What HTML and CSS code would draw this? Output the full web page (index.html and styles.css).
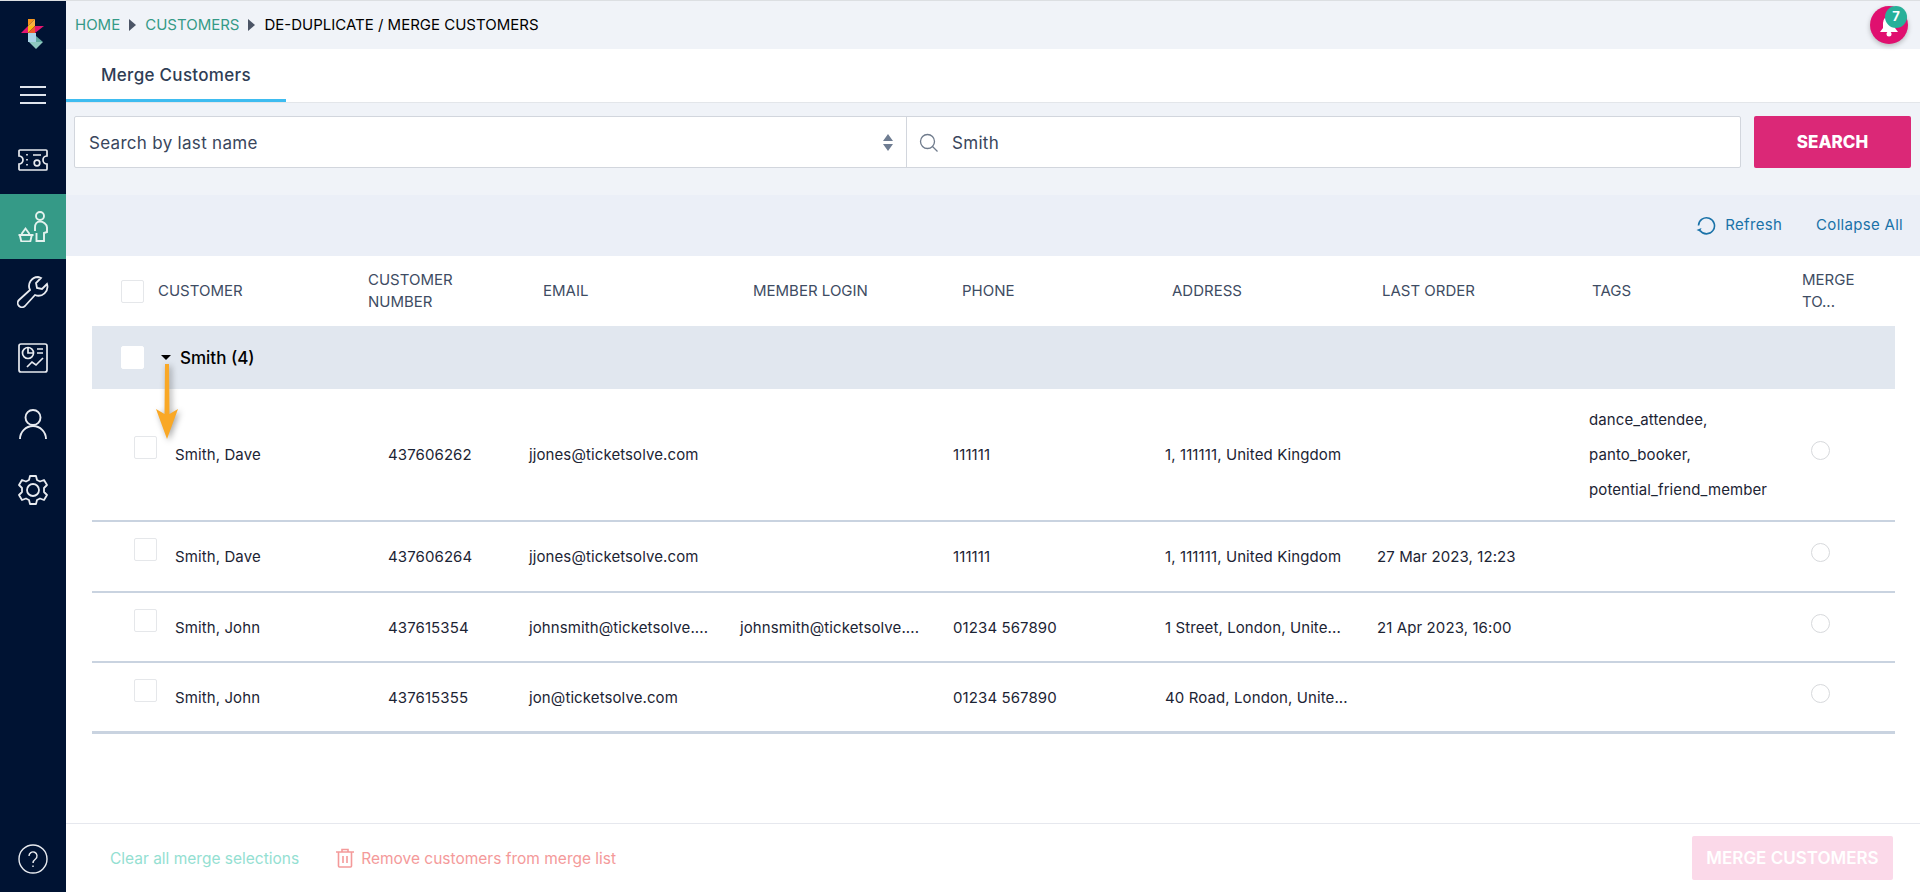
FILE: index.html
```html
<!DOCTYPE html>
<html>
<head>
  <meta charset="utf-8">
  <title>De-duplicate / Merge Customers</title>
  <link rel="stylesheet" href="styles.css">
</head>
<body>
  <div class="app">
    <nav class="sidebar">
      <div class="nav-logo">
        <svg width="24" height="32" viewBox="0 0 24 32">
          <polygon points="7,1 14,1 7,8" fill="#f7941d"/>
          <polygon points="14,1 14,8 7,8" fill="#fbb040"/>
          <polygon points="14,8 23,8 14,15" fill="#e6156f"/>
          <polygon points="0,15 7,8 7,15" fill="#e6156f"/>
          <polygon points="7,8 14,8 7,15" fill="#fdb913"/>
          <polygon points="14,8 14,15 7,15" fill="#f15a29"/>
          <polygon points="7,15 15,15 15,24 7,24" fill="#a9d3e6"/>
          <polygon points="15,24 22,24 15,31 8,24" fill="#8fc9c0"/>
          <polygon points="15,18 22,24 15,24" fill="#5fa9a0"/>
        </svg>
      </div>
      <div class="nav-item nav-menu">
        <svg width="26" height="18" viewBox="0 0 26 18" fill="none" stroke="#dfe4ec" stroke-width="2"><path d="M0 1h26M0 9h26M0 17h26"/></svg>
      </div>
      <div class="nav-item nav-tickets">
        <svg width="30" height="22" viewBox="0 0 30 22" fill="none" stroke="#e8ebf0" stroke-width="1.700"><path d="M2 1h26a1 1 0 0 1 1 1v5a4 4 0 0 0 0 8v5a1 1 0 0 1-1 1H2a1 1 0 0 1-1-1v-5a4 4 0 0 0 0-8V2a1 1 0 0 1 1-1z"/><path d="M9 5v1.500M9 10v1.500M9 15v1.500M15 6h8"/><circle cx="19" cy="14" r="2.800"/></svg>
      </div>
      <div class="nav-item nav-active">
        <svg width="30" height="31" viewBox="0 0 30 31" fill="none" stroke="#e4f2ee" stroke-width="1.900"><circle cx="22" cy="5" r="4"/><path d="M17 20v-3.500c0-3.500 2-6 5-6s7 2.500 7 6V21l-3 1v8h-7.500v-8"/><path d="M0.500 24h15M1.800 24l1.500 6.500h9l1.500-6.500M3.500 23l4-5.500 4 5.500"/></svg>
      </div>
      <div class="nav-item nav-tool">
        <svg width="32" height="32" viewBox="0 0 32 32" fill="none" stroke="#e8ebf0" stroke-width="1.800"><path d="M21 1a9 9 0 0 0-8 13L2 24a4 4 0 0 0 6 6l10-11a9 9 0 0 0 12-11l-5 5-5-1-1-5 5-5a9 9 0 0 0-3-1z"/></svg>
      </div>
      <div class="nav-item nav-tool">
        <svg width="30" height="30" viewBox="0 0 30 30" fill="none" stroke="#e8ebf0" stroke-width="1.700"><rect x="1" y="1" width="28" height="28" rx="2"/><circle cx="10" cy="10" r="5.500"/><path d="M10 5v5h5M19 6h6M19 10h6M9 24l5-5 4 3 7-7"/></svg>
      </div>
      <div class="nav-item nav-tool">
        <svg width="28" height="30" viewBox="0 0 28 30" fill="none" stroke="#e8ebf0" stroke-width="1.900"><circle cx="14" cy="8.500" r="7.500"/><path d="M1 30a13 13 0 0 1 26 0"/></svg>
      </div>
      <div class="nav-item nav-tool">
        <svg width="32" height="32" viewBox="0 0 32 32" fill="none" stroke="#e8ebf0" stroke-width="1.800"><circle cx="16" cy="16" r="6"/><path d="M13 2h6l1 4 3 1.500 4-1.500 3 5-3 3v4l3 3-3 5-4-1.500-3 1.500-1 4h-6l-1-4-3-1.500-4 1.500-3-5 3-3v-4l-3-3 3-5 4 1.500 3-1.500z" stroke-linejoin="round"/></svg>
      </div>
      <div class="nav-item nav-help">
        <svg width="30" height="30" viewBox="0 0 30 30" fill="none" stroke="#e8ebf0" stroke-width="1.400"><circle cx="15" cy="15" r="14"/><path d="M11 12a4 4 0 1 1 6.500 3c-1.700 1.200-2.500 2-2.500 4"/><path d="M15 21.500v1.500"/></svg>
      </div>
    </nav>

    <div class="main">
      <header class="topbar">
        <div class="crumbs">
          <a class="crumb-link">HOME</a><span class="crumb-arrow"></span>
          <a class="crumb-link">CUSTOMERS</a><span class="crumb-arrow"></span>
          <span class="crumb-current">DE-DUPLICATE / MERGE CUSTOMERS</span>
        </div>
        <div class="notify">
          <svg width="24" height="24" viewBox="0 0 24 24" fill="#fff"><path d="M12 3a7 7 0 0 0-6 7v5l-3 4h18l-3-4v-5a7 7 0 0 0-6-7z"/><circle cx="12" cy="21" r="2.500"/></svg>
          <span class="notify-count">7</span>
        </div>
      </header>

      <div class="tabs">
        <div class="tab">Merge Customers</div>
      </div>

      <div class="searchbar">
        <div class="search-box">
          <div class="search-select">
            <span>Search by last name</span>
            <svg width="10" height="17" viewBox="0 0 10 17" fill="#6f7d92"><path d="M5 0l5 7H0zM5 17l5-7H0z"/></svg>
          </div>
          <div class="search-input">
            <svg width="20" height="20" viewBox="0 0 20 20" fill="none" stroke="#6f7b8c" stroke-width="1.300"><circle cx="8.500" cy="8.500" r="7"/><path d="M13.500 13.500l5 5"/></svg>
            <span>Smith</span>
          </div>
        </div>
        <button class="search-btn">SEARCH</button>
      </div>

      <div class="toolbar">
        <a class="tool-link">
          <svg width="20" height="20" viewBox="0 0 20 20" fill="none" stroke="#1a72a8" stroke-width="1.600"><path d="M4 15.500a8 8 0 1 0-1.500-5"/><path d="M0.500 15l3.500 1.500 1.500-3.500" fill="#1a72a8" stroke="none"/></svg>
          Refresh
        </a>
        <a class="tool-link">Collapse All</a>
      </div>

      <div class="table">
        <div class="thead">
          <div class="th th-first"><span class="check"></span>CUSTOMER</div>
          <div class="th">CUSTOMER<br>NUMBER</div>
          <div class="th">EMAIL</div>
          <div class="th">MEMBER LOGIN</div>
          <div class="th">PHONE</div>
          <div class="th">ADDRESS</div>
          <div class="th">LAST ORDER</div>
          <div class="th">TAGS</div>
          <div class="th">MERGE<br>TO...</div>
        </div>

        <div class="group-row">
          <span class="check check-white"></span>
          <span class="caret"></span>
          <span class="group-name">Smith (4)</span>
        </div>

        <div class="row row-tall">
          <div class="td td-first"><span class="check"></span>Smith, Dave</div>
          <div class="td">437606262</div>
          <div class="td">jjones@ticketsolve.com</div>
          <div class="td"></div>
          <div class="td">111111</div>
          <div class="td">1, 111111, United Kingdom</div>
          <div class="td"></div>
          <div class="td td-tags"><p>dance_attendee,</p><p>panto_booker,</p><p>potential_friend_member</p></div>
          <div class="td"><span class="radio"></span></div>
        </div>
        <div class="row">
          <div class="td td-first"><span class="check"></span>Smith, Dave</div>
          <div class="td">437606264</div>
          <div class="td">jjones@ticketsolve.com</div>
          <div class="td"></div>
          <div class="td">111111</div>
          <div class="td">1, 111111, United Kingdom</div>
          <div class="td">27 Mar 2023, 12:23</div>
          <div class="td"></div>
          <div class="td"><span class="radio"></span></div>
        </div>
        <div class="row row-short">
          <div class="td td-first"><span class="check"></span>Smith, John</div>
          <div class="td">437615354</div>
          <div class="td">johnsmith@ticketsolve....</div>
          <div class="td">johnsmith@ticketsolve....</div>
          <div class="td">01234 567890</div>
          <div class="td">1 Street, London, Unite...</div>
          <div class="td">21 Apr 2023, 16:00</div>
          <div class="td"></div>
          <div class="td"><span class="radio"></span></div>
        </div>
        <div class="row row-last">
          <div class="td td-first"><span class="check"></span>Smith, John</div>
          <div class="td">437615355</div>
          <div class="td">jon@ticketsolve.com</div>
          <div class="td"></div>
          <div class="td">01234 567890</div>
          <div class="td">40 Road, London, Unite...</div>
          <div class="td"></div>
          <div class="td"></div>
          <div class="td"><span class="radio"></span></div>
        </div>
      </div>

      <footer class="footer">
        <div class="footer-links">
          <a class="clear-link">Clear all merge selections</a>
          <a class="remove-link">
            <svg width="20" height="20" viewBox="0 0 20 20" fill="none" stroke="#f49a9a" stroke-width="1.600"><path d="M1 4h18M7 4V1.500h6V4M3.500 4v14a1 1 0 0 0 1 1h11a1 1 0 0 0 1-1V4M8 8v7M12 8v7"/></svg>
            Remove customers from merge list
          </a>
        </div>
        <button class="merge-btn">MERGE CUSTOMERS</button>
      </footer>
    </div>
  </div>

  <svg class="arrow" width="24" height="76" viewBox="0 0 24 76">
    <path d="M10 0h4l.5 50L23 45 12 75 1 45l8.500 5z" fill="#f9a826"/>
  </svg>
</body>
</html>
```

FILE: styles.css
```css
* {
  box-sizing: border-box;
}

html,
body {
  margin: 0;
  padding: 0;
  height: 100%;
}

body {
  font-family: "Inter", "Liberation Sans", sans-serif;
  color: #1c2434;
  background: #fff;
  overflow: hidden;
}

p {
  margin: 0;
}

.app {
  display: flex;
  height: 892px;
  border-top: 1px solid #dcdfe2;
}

/* sidebar */
.sidebar {
  width: 66px;
  flex: none;
  background: #001333;
  display: flex;
  flex-direction: column;
  align-items: stretch;
}

.nav-logo {
  height: 63px;
  display: flex;
  align-items: flex-end;
  justify-content: center;
  padding-bottom: 14px;
}

.nav-item {
  display: flex;
  align-items: center;
  justify-content: center;
}

.nav-menu {
  height: 62px;
}

.nav-tickets {
  height: 68px;
}

.nav-active {
  height: 65px;
  background: #359a87;
}

.nav-tool {
  height: 66px;
}

.nav-help {
  margin-top: auto;
  height: 66px;
}

/* main */
.main {
  flex: 1;
  display: flex;
  flex-direction: column;
  min-width: 0;
}

.topbar {
  height: 48px;
  flex: none;
  background: #f0f3f8;
  display: flex;
  justify-content: space-between;
  padding: 0 12px 0 9px;
}

.crumbs {
  display: flex;
  align-items: center;
  font-size: 15px;
  height: 47px;
}

.crumb-link {
  color: #359a87;
}

.crumb-arrow {
  width: 0;
  height: 0;
  margin: 0 9px;
  border-left: 7px solid #4c5566;
  border-top: 6px solid transparent;
  border-bottom: 6px solid transparent;
}

.crumb-current {
  color: #000;
}

.notify {
  position: relative;
  width: 38px;
  height: 38px;
  margin-top: 5px;
  border-radius: 50%;
  background: #e0106f;
  box-shadow: 0 2px 5px rgba(0, 0, 0, 0.25);
  display: flex;
  align-items: center;
  justify-content: center;
}

.notify-count {
  position: absolute;
  top: 0;
  right: 1px;
  width: 22px;
  height: 22px;
  border-radius: 50%;
  background: #27b099;
  color: #fff;
  font-size: 13px;
  font-weight: 700;
  line-height: 20px;
  text-align: center;
}

.tabs {
  height: 54px;
  flex: none;
  background: #fff;
  border-bottom: 1px solid #e3e6ea;
  display: flex;
}

.tab {
  width: 220px;
  height: 53px;
  border-bottom: 3px solid #3ebcf0;
  font-size: 17px;
  font-weight: 500;
  letter-spacing: 0.3px;
  color: #2f3d55;
  padding-left: 35px;
  line-height: 52px;
}

.searchbar {
  height: 92px;
  flex: none;
  background: #f0f3f8;
  display: flex;
  padding: 13px 9px 0 8px;
  gap: 13px;
}

.search-box {
  flex: 1;
  height: 52px;
  display: flex;
  background: #fff;
  border: 1px solid #d2d6dd;
  border-radius: 2px;
  font-size: 17px;
  letter-spacing: 0.3px;
  color: #39465c;
}

.search-select {
  width: 832px;
  flex: none;
  display: flex;
  align-items: center;
  justify-content: space-between;
  padding: 1px 13px 0 14px;
  border-right: 1px solid #d2d6dd;
}

.search-input {
  flex: 1;
  display: flex;
  align-items: center;
  gap: 13px;
  padding: 1px 0 0 12px;
}

.search-btn {
  width: 157px;
  height: 52px;
  border: 0;
  border-radius: 2px;
  background: #db2877;
  color: #fff;
  font-family: "Inter", sans-serif;
  font-size: 17px;
  font-weight: 800;
}

.toolbar {
  height: 61px;
  flex: none;
  background: #ebeff7;
  display: flex;
  justify-content: flex-end;
  align-items: center;
  gap: 34px;
  padding: 0 17px 2px 0;
  font-size: 15px;
  letter-spacing: 0.3px;
  color: #1a72a8;
}

.tool-link {
  display: flex;
  align-items: center;
  gap: 9px;
}

/* table */
.table {
  flex: 1;
  padding: 0 25px 0 26px;
}

.thead {
  height: 70px;
  display: grid;
  grid-template-columns: 276px 175px 210px 209px 210px 210px 210px 210px 1fr;
  align-items: center;
  font-size: 15px;
  line-height: 22px;
  color: #3e4c63;
}

.th-first {
  display: flex;
  align-items: center;
  padding-left: 29px;
}

.th-first .check {
  margin-right: 14px;
}

.check {
  display: inline-block;
  flex: none;
  width: 23px;
  height: 23px;
  background: #fff;
  border: 1px solid #e5e7ea;
  border-radius: 2px;
}

.check-white {
  border-color: #fff;
}

.group-row {
  height: 63px;
  background: #e1e7ef;
  display: flex;
  align-items: center;
  padding-left: 29px;
}

.caret {
  width: 0;
  height: 0;
  margin: 0 9px 0 17px;
  border-top: 5px solid #000;
  border-left: 5px solid transparent;
  border-right: 5px solid transparent;
}

.group-name {
  font-size: 17px;
  font-weight: 500;
  color: #000;
}

.row {
  height: 71px;
  display: grid;
  grid-template-columns: 296px 141px 211px 213px 212px 212px 212px 222px 1fr;
  align-items: center;
  border-bottom: 2px solid #c9d3e0;
  font-size: 15px;
  letter-spacing: 0.1px;
  color: #1c2434;
}

.row-tall {
  height: 133px;
}

.row-short {
  height: 70px;
}

.row-last {
  border-bottom-width: 3px;
}

.td {
  white-space: nowrap;
}

.td-first {
  display: flex;
  align-items: center;
  padding-left: 42px;
}

.td-first .check {
  margin-right: 18px;
  margin-top: -14px;
}

.td-tags {
  line-height: 35px;
}

.radio {
  display: block;
  width: 19px;
  height: 19px;
  border: 1px solid #d7d9dc;
  border-radius: 50%;
  margin-bottom: 8px;
}

/* footer */
.footer {
  height: 69px;
  flex: none;
  border-top: 1px solid #e6e8ee;
  display: flex;
  justify-content: space-between;
  align-items: center;
  padding: 0 27px 0 44px;
  background: #fff;
}

.footer-links {
  display: flex;
  align-items: center;
  gap: 36px;
  font-size: 15.500px;
}

.clear-link {
  color: #94e0d2;
}

.remove-link {
  display: flex;
  align-items: center;
  gap: 6px;
  color: #f49a9a;
}

.merge-btn {
  width: 201px;
  height: 44px;
  border: 0;
  border-radius: 2px;
  background: #fbd9e9;
  color: #fff;
  font-family: "Inter", sans-serif;
  font-size: 17px;
  font-weight: 600;
}

/* annotation arrow on top of the table */
.arrow {
  position: absolute;
  left: 155px;
  top: 364px;
  filter: drop-shadow(2px 2px 3px rgba(0, 0, 0, 0.35));
}
```
